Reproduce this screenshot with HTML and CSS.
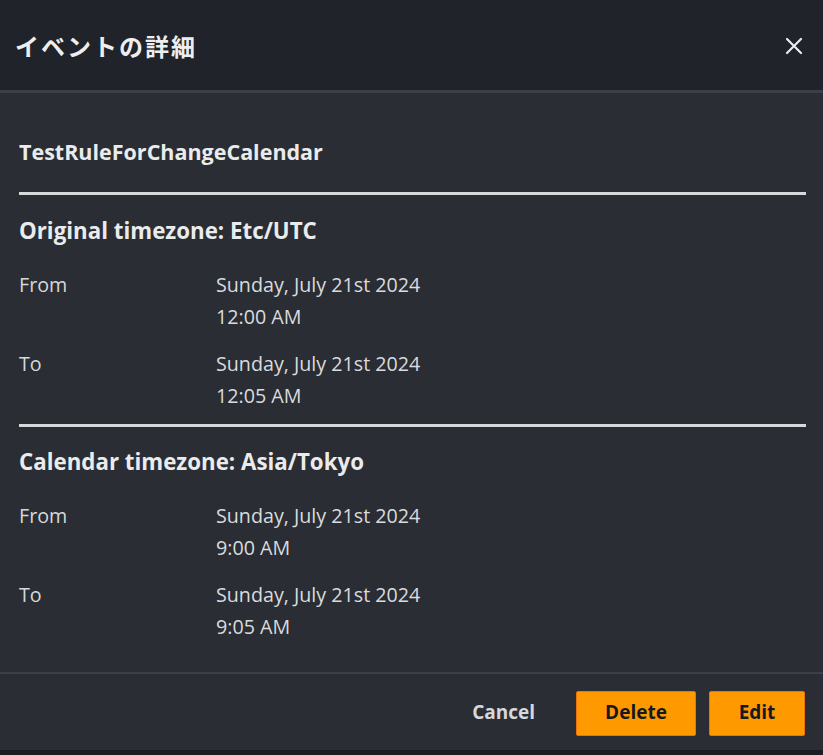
FILE: index.html
```html
<!DOCTYPE html>
<html lang="ja">
<head>
<meta charset="utf-8">
<title>イベントの詳細</title>
<link rel="stylesheet" href="styles.css">
</head>
<body>
<div class="modal">
  <div class="header">
    <h1 class="title">イベントの詳細</h1>
    <button class="close" aria-label="Close">
      <svg width="18" height="18" viewBox="0 0 18 18"><path d="M2 2 L16 16 M16 2 L2 16" stroke="#e9ebed" stroke-width="2.2" stroke-linecap="round" fill="none"/></svg>
    </button>
  </div>
  <div class="content">
    <div class="name">TestRuleForChangeCalendar</div>
    <div class="rule"></div>
    <div class="section-title">Original timezone: Etc/UTC</div>
    <div class="row first">
      <div class="label">From</div>
      <div class="value">Sunday, July 21st 2024<br>12:00 AM</div>
    </div>
    <div class="row">
      <div class="label">To</div>
      <div class="value">Sunday, July 21st 2024<br>12:05 AM</div>
    </div>
    <div class="rule second"></div>
    <div class="section-title cal">Calendar timezone: Asia/Tokyo</div>
    <div class="row first">
      <div class="label">From</div>
      <div class="value">Sunday, July 21st 2024<br>9:00 AM</div>
    </div>
    <div class="row">
      <div class="label">To</div>
      <div class="value">Sunday, July 21st 2024<br>9:05 AM</div>
    </div>
  </div>
  <div class="footer">
    <button class="btn link">Cancel</button>
    <button class="btn primary delete">Delete</button>
    <button class="btn primary edit">Edit</button>
  </div>
</div>
</body>
</html>
```
FILE: styles.css
```css
html, body {
  margin: 0;
  padding: 0;
}
body {
  background: #1b1d22;
  font-family: "Open Sans", "Noto Sans", "Noto Sans CJK JP", sans-serif;
  color: #d5d8dc;
  width: 823px;
  height: 755px;
  overflow: hidden;
}
.modal {
  width: 823px;
  height: 750px;
  background: #2a2d33;
  display: flex;
  flex-direction: column;
}
.header {
  height: 90px;
  background: #20232a;
  border-bottom: 3px solid #3b3f48;
  display: flex;
  align-items: center;
  justify-content: space-between;
  padding: 0 20px 0 15px;
  box-sizing: content-box;
}
.title {
  margin: 0;
  font-family: "Noto Sans CJK JP", sans-serif;
  font-weight: 700;
  font-size: 24px;
  letter-spacing: 2px;
  color: #eceef0;
}
.close {
  background: none;
  border: 0;
  padding: 0;
  margin-top: 2px;
  width: 18px;
  height: 18px;
  display: flex;
}
.content {
  flex: 1;
  padding: 0 17px 0 19px;
}
.name {
  margin-top: 44px;
  line-height: 30px;
  font-size: 21.5px;
  font-weight: 700;
  color: #e9ebed;
}
.rule {
  margin-top: 25px;
  height: 3px;
  background: #d6d8da;
}
.rule.second {
  margin-top: 12px;
}
.section-title {
  margin-top: 21px;
  line-height: 30px;
  font-size: 22.3px;
  font-weight: 700;
  color: #e9ebed;
}
.section-title.cal {
  margin-top: 20px;
}
.row {
  display: flex;
  margin-top: 15px;
  font-size: 19.7px;
  line-height: 32px;
}
.row.first {
  margin-top: 23px;
}
.label {
  width: 197px;
  flex: none;
}
.value {
  color: #d9dbde;
}
.footer {
  border-top: 2px solid #3b3f48;
  display: flex;
  justify-content: flex-end;
  gap: 13px;
  padding: 17px 18px 14px 0;
}
.btn {
  height: 45px;
  font-family: "Open Sans", "Noto Sans", sans-serif;
  font-size: 19px;
  font-weight: 700;
  line-height: 1;
  padding-bottom: 4px;
  border-radius: 2px;
  cursor: pointer;
}
.link {
  background: none;
  border: 0;
  color: #d5d8dc;
  padding-left: 24px;
  padding-right: 28px;
}
.primary {
  background: #ff9900;
  border: 1px solid #ec7211;
  color: #16191f;
}
.delete {
  width: 120px;
}
.edit {
  width: 96px;
}
```
